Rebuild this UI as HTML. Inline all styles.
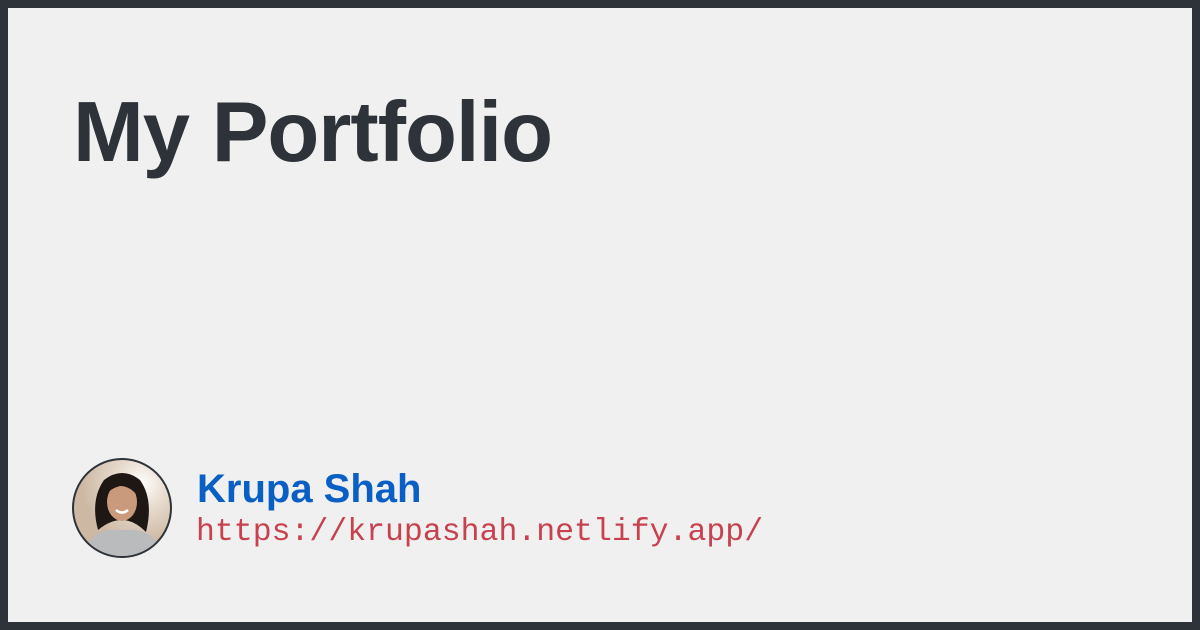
<!DOCTYPE html>
<html><head><style>
html,body{margin:0;padding:0}
body{width:1200px;height:630px;background:#2d3339;position:relative;overflow:hidden}
.in{position:absolute;left:8px;top:8px;width:1184px;height:614px;background:#f0f0f0}
h1{position:absolute;left:73px;top:90px;margin:0;font:bold 85px "Liberation Sans",sans-serif;color:#2d3339;letter-spacing:-1px;line-height:1}
.av{position:absolute;left:72px;top:458px;width:96px;height:96px;border-radius:50%;border:2px solid #2d3339;overflow:hidden;background:radial-gradient(circle at 70% 25%,#fff 0,#e8ddd0 25%,#cdb8a4 60%)}
.name{position:absolute;left:197px;top:469px;font:bold 40px "Liberation Sans",sans-serif;color:#0a5fc4;line-height:1}
.url{position:absolute;left:196px;top:517px;font:31.5px "Liberation Mono",monospace;color:#c8414f;line-height:1}
</style></head><body>
<div class="in"></div>
<h1>My Portfolio</h1>
<div class="av"><svg width="96" height="96" viewBox="0 0 96 96">
<path d="M10 96 Q14 74 34 70 L62 70 Q84 74 88 96Z" fill="#b9bbbc"/>
<path d="M24 70 Q16 40 30 20 Q48 6 66 20 Q80 40 72 72 Q60 60 48 60 Q36 60 24 70Z" fill="#1e1714"/>
<ellipse cx="48" cy="42" rx="15" ry="19" fill="#c99a7c"/>
<path d="M32 34 Q36 18 50 20 Q62 22 64 36 Q56 26 46 26 Q38 28 32 34Z" fill="#1e1714"/>
<path d="M42 50 Q48 55 54 50" stroke="#fff" stroke-width="2.5" fill="none"/>
</svg></div>
<div class="name">Krupa Shah</div>
<div class="url">https://krupashah.netlify.app/</div>
</body></html>
